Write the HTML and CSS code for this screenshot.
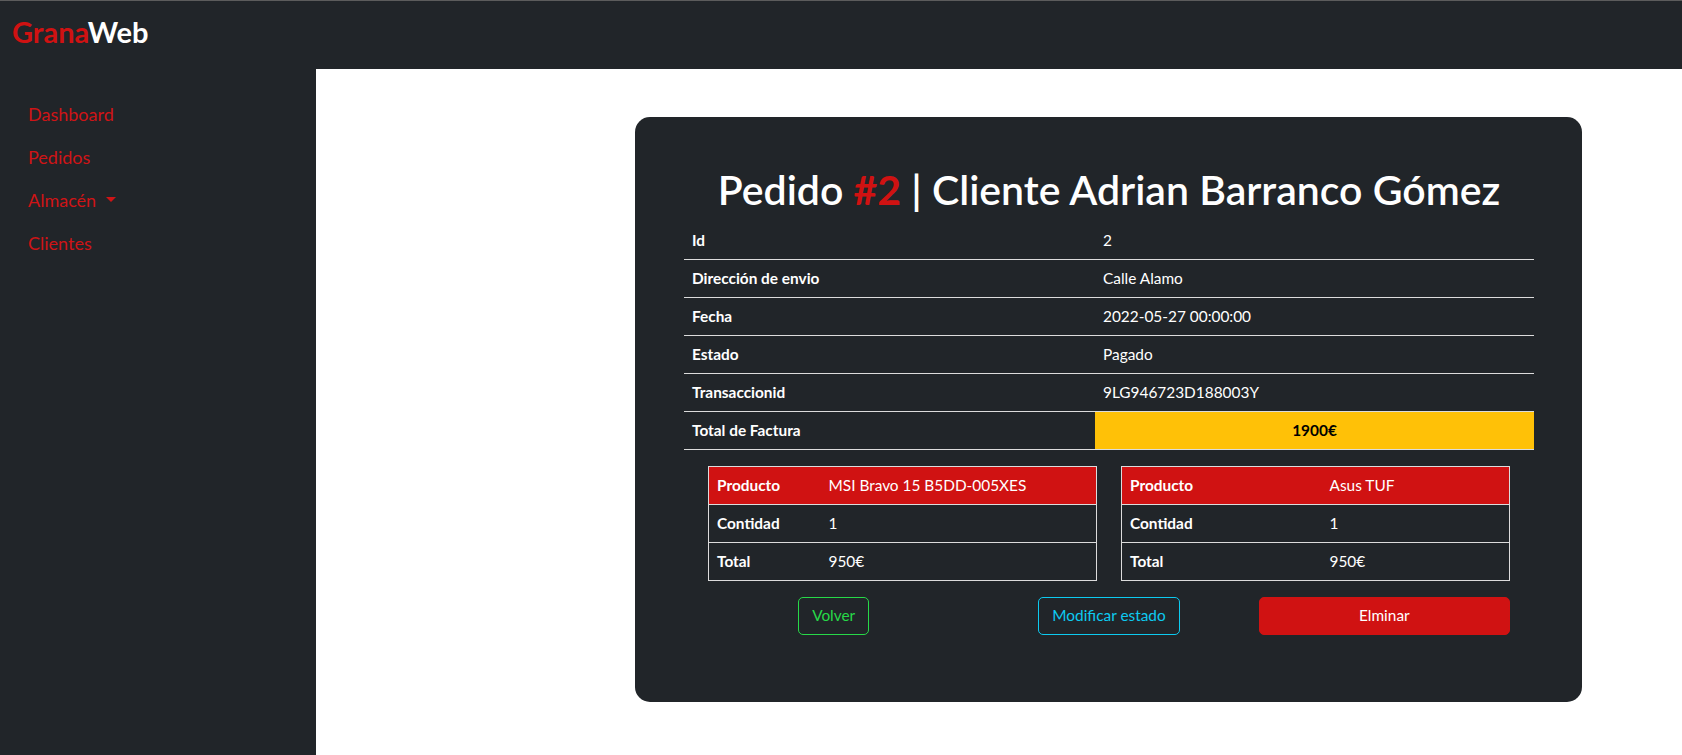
FILE: index.html
```html
<!DOCTYPE html>
<html lang="es">
<head>
<meta charset="utf-8">
<title>GranaWeb - Pedido #2</title>
<link rel="stylesheet" href="styles.css">
</head>
<body>
<header class="topbar">
  <a class="brand" href="#"><span class="brand-red">Grana</span>Web</a>
</header>
<div class="layout">
  <nav class="sidebar">
    <a class="side-link" href="#">Dashboard</a>
    <a class="side-link" href="#">Pedidos</a>
    <a class="side-link" href="#">Almacén<span class="caret"></span></a>
    <a class="side-link" href="#">Clientes</a>
  </nav>
  <main class="content">
    <section class="card">
      <h1 class="title">Pedido <span class="title-num">#2</span> | Cliente Adrian Barranco Gómez</h1>
      <table class="info">
        <tbody>
          <tr><th class="info-label">Id</th><td>2</td></tr>
          <tr><th class="info-label">Dirección de envio</th><td>Calle Alamo</td></tr>
          <tr><th class="info-label">Fecha</th><td>2022-05-27 00:00:00</td></tr>
          <tr><th class="info-label">Estado</th><td>Pagado</td></tr>
          <tr><th class="info-label">Transaccionid</th><td>9LG946723D188003Y</td></tr>
          <tr><th class="info-label">Total de Factura</th><td class="total-cell">1900€</td></tr>
        </tbody>
      </table>
      <div class="products">
        <table class="prod prod-a">
          <tbody>
            <tr class="prod-head"><th class="prod-label">Producto</th><td>MSI Bravo 15 B5DD-005XES</td></tr>
            <tr><th class="prod-label">Contidad</th><td>1</td></tr>
            <tr><th class="prod-label">Total</th><td>950€</td></tr>
          </tbody>
        </table>
        <table class="prod prod-b">
          <tbody>
            <tr class="prod-head"><th class="prod-label">Producto</th><td>Asus TUF</td></tr>
            <tr><th class="prod-label">Contidad</th><td>1</td></tr>
            <tr><th class="prod-label">Total</th><td>950€</td></tr>
          </tbody>
        </table>
      </div>
      <div class="actions">
        <div class="act act-back"><a class="btn btn-green" href="#">Volver</a></div>
        <div class="act act-mod"><a class="btn btn-cyan" href="#">Modificar estado</a></div>
        <div class="act act-del"><a class="btn btn-red" href="#">Elminar</a></div>
      </div>
    </section>
  </main>
</div>
</body>
</html>
```

FILE: styles.css
```css
* { box-sizing: border-box; }

html, body {
  margin: 0;
  padding: 0;
}

body {
  background: #212529;
  font-family: "Lato", "Liberation Sans", sans-serif;
  color: #ffffff;
  height: 755px;
  overflow: hidden;
}

a { text-decoration: none; }

.topbar {
  height: 69px;
  border-top: 1px solid #5c5c5c;
  padding: 14px 0 0 12px;
}

.brand {
  font-size: 29px;
  font-weight: 700;
  line-height: 1.2;
  color: #ffffff;
  display: inline-block;
}

.brand-red { color: #d01212; }

.layout {
  display: flex;
  height: 686px;
}

.sidebar {
  width: 316px;
  flex: 0 0 316px;
  padding: 23px 0 0 28px;
  display: flex;
  flex-direction: column;
  align-items: flex-start;
}

.side-link {
  color: #cf1416;
  font-size: 18px;
  line-height: 26px;
  padding: 8.5px 0;
  display: inline-flex;
  align-items: center;
}

.caret {
  display: inline-block;
  width: 0;
  height: 0;
  margin-left: 10px;
  border-top: 5px solid #cf1416;
  border-left: 5px solid transparent;
  border-right: 5px solid transparent;
}

.content {
  flex: 1;
  background: #ffffff;
  padding-top: 48px;
}

.card {
  margin-left: 319px;
  width: 947px;
  background: #212529;
  border-radius: 15px;
  padding: 48px 48px 67px 49px;
}

.title {
  margin: 0 0 7.5px 0;
  text-align: center;
  font-size: 41px;
  font-weight: 600;
  line-height: 1.2;
  color: #ffffff;
}

.title-num {
  color: #d01212;
  font-weight: 700;
}

.info {
  width: 850px;
  border-collapse: collapse;
  font-size: 15.4px;
}

.info th,
.info td {
  padding: 7.5px 8px 6.5px 8px;
  line-height: 23px;
  border-bottom: 1px solid #dcdcdc;
  text-align: left;
}

.info-label {
  width: 411px;
  font-weight: 700;
}

.info .total-cell {
  background: #ffc107;
  color: #000000;
  font-weight: 700;
  text-align: center;
}

.products {
  margin-top: 16px;
  padding: 0 24px;
  display: grid;
  grid-template-columns: 1fr 1fr;
  column-gap: 24px;
}

.prod {
  width: 100%;
  border-collapse: collapse;
  border: 1px solid #dcdcdc;
  font-size: 15.4px;
}

.prod th,
.prod td {
  padding: 7.5px 8px 6.5px 8px;
  line-height: 23px;
  text-align: left;
  border-bottom: 1px solid #dcdcdc;
}

.prod-label { font-weight: 700; }

.prod-a .prod-label { width: 112px; }
.prod-b .prod-label { width: 200px; }

.prod-head th,
.prod-head td {
  background: #d01212;
}

.actions {
  margin-top: 16px;
  padding: 0 24px;
  display: grid;
  grid-template-columns: 1fr 1fr 1fr;
}

.act {
  display: flex;
  justify-content: center;
}

.act-back { padding-right: 16px; }

.act-del {
  padding-left: 16px;
  justify-content: stretch;
}

.btn {
  display: inline-block;
  font-size: 15.4px;
  line-height: 22.7px;
  padding: 6.65px 13px;
  border: 1px solid transparent;
  border-radius: 5px;
  text-align: center;
  white-space: nowrap;
}

.btn-green {
  color: #27d948;
  border-color: #27d948;
}

.btn-cyan {
  color: #0dcaf0;
  border-color: #0dcaf0;
}

.btn-red {
  flex: 1;
  background: #d01212;
  border-color: #d01212;
  color: #ffffff;
}
```
